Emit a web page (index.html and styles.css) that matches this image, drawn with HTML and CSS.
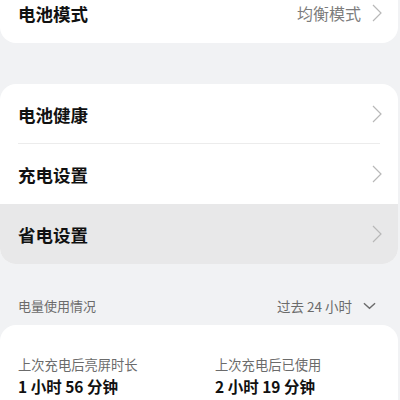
FILE: index.html
```html
<!DOCTYPE html>
<html lang="zh-CN">
<head>
    <meta charset="UTF-8">
    <meta name="viewport" content="width=device-width, initial-scale=1.0">
    <title>电池</title>
    <link rel="stylesheet" href="styles.css">
</head>
<body>
    <div class="page">
        <!-- 电池模式 -->
        <div class="card card-top">
            <div class="row">
                <span class="row-title">电池模式</span>
                <span class="row-value">均衡模式</span>
                <svg class="chevron" viewBox="0 0 10 18"><path d="M1 1 L9 9 L1 17"/></svg>
            </div>
        </div>

        <!-- 设置列表 -->
        <div class="card">
            <div class="row divided">
                <span class="row-title">电池健康</span>
                <svg class="chevron" viewBox="0 0 10 18"><path d="M1 1 L9 9 L1 17"/></svg>
            </div>
            <div class="row">
                <span class="row-title">充电设置</span>
                <svg class="chevron" viewBox="0 0 10 18"><path d="M1 1 L9 9 L1 17"/></svg>
            </div>
            <div class="row pressed">
                <span class="row-title">省电设置</span>
                <svg class="chevron" viewBox="0 0 10 18"><path d="M1 1 L9 9 L1 17"/></svg>
            </div>
        </div>

        <!-- 电量使用情况 -->
        <div class="section-header">
            <span>电量使用情况</span>
            <span class="range">过去 24 小时
                <svg class="chevron-down" viewBox="0 0 14 8"><path d="M1 1 L7 6.5 L13 1"/></svg>
            </span>
        </div>

        <div class="card stats">
            <div class="stat">
                <span class="stat-label">上次充电后亮屏时长</span>
                <span class="stat-value">1 小时 56 分钟</span>
            </div>
            <div class="stat">
                <span class="stat-label">上次充电后已使用</span>
                <span class="stat-value">2 小时 19 分钟</span>
            </div>
        </div>
    </div>
</body>
</html>
```

FILE: styles.css
```css
body {
    margin: 0;
    background-color: #f1f2f4;
    font-family: "Noto Sans CJK SC", "Noto Sans", sans-serif;
    color: #111;
    overflow: hidden;
}

.page {
    display: flex;
    flex-direction: column;
    width: 398px;
}

.card {
    background-color: #fff;
    border-radius: 16px;
    overflow: hidden;
}

/* 第一张卡片上半部分在屏幕外 */
.card-top {
    margin-top: -17px;
    margin-bottom: 41px;
}

.row {
    display: flex;
    align-items: center;
    height: 60px;
    padding: 0 16px 0 18px;
    box-sizing: border-box;
    position: relative;
}

.row.divided::after {
    content: "";
    position: absolute;
    left: 18px;
    right: 18px;
    bottom: 0;
    height: 1px;
    background-color: #ececec;
}

.row.pressed {
    background-color: #e8e8e9;
}

.row-title {
    flex: 1;
    font-size: 17.5px;
    font-weight: 600;
}

.row-value {
    font-size: 16px;
    color: #7c7c7c;
    margin-right: 11px;
}

.chevron {
    width: 10px;
    height: 18px;
    fill: none;
    stroke: #b8b8b8;
    stroke-width: 1.2;
}

.section-header {
    display: flex;
    justify-content: space-between;
    align-items: center;
    height: 61px;
    padding: 22px 22px 0 18px;
    box-sizing: border-box;
    font-size: 13px;
    color: #6b6b6b;
}

.range {
    display: flex;
    align-items: center;
    gap: 11px;
    font-size: 13.5px;
}

.chevron-down {
    width: 13px;
    height: 8px;
    fill: none;
    stroke: #6b6b6b;
    stroke-width: 1.5;
}

.stats {
    display: grid;
    grid-template-columns: 197px 1fr;
    padding: 30px 18px 20px 18px;
    border-radius: 16px 16px 0 0;
}

.stat {
    display: flex;
    flex-direction: column;
    gap: 1px;
}

.stat-label {
    font-size: 13.3px;
    color: #6b6b6b;
}

.stat-value {
    font-size: 15.5px;
    font-weight: 600;
}
```
